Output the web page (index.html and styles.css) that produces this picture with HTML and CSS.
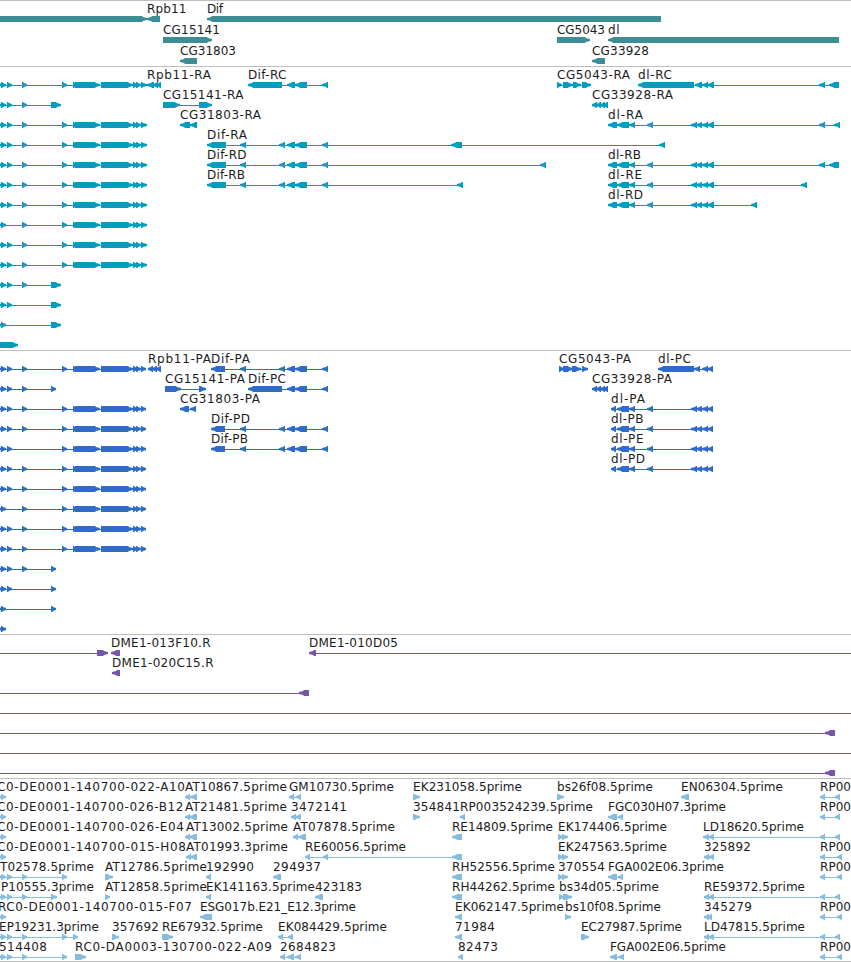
FILE: index.html
```html
<!DOCTYPE html>
<html lang="en">
<head>
  <meta charset="UTF-8" />
  <title>Genome Tracks</title>
  <link rel="stylesheet" href="styles.css">
</head>
<body>
  <div class="browser">
    <div class="track genes" id="genes"></div>
    <div class="track transcripts" id="transcripts"></div>
    <div class="track proteins" id="proteins"></div>
    <div class="track bacs" id="bacs"></div>
    <div class="track ests" id="ests"></div>
  </div>
  <script src="tracks.js"></script>
</body>
</html>
```
FILE: styles.css
```css
body {
  margin: 0;
  background: #fff;
  overflow: hidden;
}
.browser {
  width: 851px;
  height: 962px;
  display: flex;
  flex-direction: column;
  border-bottom: 1px solid #bebebe;
  box-sizing: border-box;
  overflow: hidden;
}
.track {
  border-top: 1px solid #bebebe;
  padding-bottom: 3px;
}
.row {
  display: block;
  width: 851px;
  height: 20px;
  overflow: visible;
}
.row text {
  font-family: "DejaVu Sans", sans-serif;
  font-size: 12px;
  fill: #1c1c1c;
}
.row polygon,
.row rect {
  fill: currentColor;
}
.genes {
  color: #3d8e94;
  padding-bottom: 2px;
}
.genes .row {
  height: 21px;
}
.transcripts {
  color: #009dbf;
}
.proteins {
  color: #2f6bcb;
}
.bacs {
  color: #7856a7;
}
.ests {
  color: #87bcde;
  padding-bottom: 2px;
}
```
FILE: tracks.js
```js
// Each row is a list of features: "direction start,end start,end ... | label x end"
const first = '> -4,2 1,6 7,12 22,27 62,67 73,76 75,100 101,133 133,138 136,141 141,';
const noSecond = '> -4,2 1,6 22,27 62,67 73,76 75,100 101,133 133,138 136,141 141,';
const noThird = '> -4,2 1,6 7,12 62,67 73,76 75,100 101,133 133,138 136,141 141,';
const dif = ' 240,246 279,285 287,295 295,307 322,328';
const dl = ' 617,629 629,635 647,653 691,697 696,702 702,708 707,';

const tracks = {
  genes: [
    ['> -10,147', '< 147,160 | Rpb11 147 186.5', '< 207,661 | Dif 207 223'],
    ['> 163,212 | CG15141 163 220', '> 557,590 | CG5043 557 605', '< 608,839 | dl 608 619.5'],
    ['< 180,197 | CG31803 180 236', '< 592,605 | CG33928 592 649']
  ],
  transcripts: [
    [first + '147', '< 147,154 153,158 157,161 | Rpb11-RA 147 211', '< 248,282 287,295 295,307 322,328 | Dif-RC 248 286.5',
      '> 557,562 563,573 573,581 582,591 | CG5043-RA 557 630', '< 638,694 695,702 702,708 707,714 819,825 829,839 | dl-RC 638 672'],
    ['> -4,2 1,6 7,12 22,27 51,61', '> 163,180 199,212 | CG15141-RA 163 243.5', '< 592,597 596,601 600,605 603,608 | CG33928-RA 592 673'],
    [first + '147', '< 180,190 190,197 | CG31803-RA 180 261', '< 608,617' + dl + '714 819,825 834,840 | dl-RA 608 643'],
    [first + '147', '< 207,226' + dif + ' 451,462 659,665 | Dif-RA 207 247'],
    [first + '147', '< 207,226' + dif + ' 540,546 | Dif-RD 207 246.5', '< 608,617' + dl + '714 819,825 829,839 | dl-RB 608 641'],
    [first + '147', '< 207,226' + dif + ' 457,463 | Dif-RB 207 245', '< 608,617' + dl + '714 801,807 | dl-RE 608 642'],
    [first + '147', '< 608,617' + dl + '714 751,757 | dl-RD 608 643'],
    [noSecond + '147'],
    [first + '147'],
    [first + '147'],
    ['> -4,2 1,6 7,12 22,27 51,61'],
    ['> -4,2 1,6 7,12 51,61'],
    ['> -4,2 1,6 51,61'],
    ['> 0,18']
  ],
  proteins: [
    [first + '146', '< 148,153 152,157 156,161 | Rpb11-PA 148 211', '< 211,225' + dif + ' | Dif-PA 211 250',
      '> 559,564 563,573 572,581 582,588 | CG5043-PA 559 631', '< 658,694 694,700 702,708 707,713 | dl-PC 658 691'],
    ['> -4,2 1,6 7,12 22,27 51,56', '> 165,181 199,206 | CG15141-PA 165 245', '< 248,282 287,295 295,307 322,328 | Dif-PC 248 286',
      '< 592,597 596,601 600,605 603,608 | CG33928-PA 592 672'],
    [first + '146', '< 180,189 190,196 | CG31803-PA 180 260', '< 611,616' + dl + '713 | dl-PA 611 645'],
    [first + '146', '< 211,225' + dif + ' | Dif-PD 211 250', '< 611,616' + dl + '713 | dl-PB 611 643.5'],
    [noThird + '146', '< 211,225' + dif + ' | Dif-PB 211 248', '< 611,616' + dl + '713 | dl-PE 611 643.5'],
    [first + '146', '< 611,616' + dl + '713 | dl-PD 611 645'],
    [first + '146'],
    [noSecond + '146'],
    [first + '146'],
    [first + '146'],
    ['> -4,2 1,6 7,12 22,27 51,56'],
    ['> -4,2 1,6 7,12 51,56'],
    ['> -4,2 1,6 51,56'],
    ['> -4,2 1,6']
  ],
  bacs: [
    ['> -20,-10 97,108', '< 111,120 | DME1-013F10.R 111 210.5', '< 309,316 870,880 | DME1-010D05 309 398'],
    ['< 112,120 | DME1-020C15.R 112 213.5'],
    ['< -20,-10 299,309'],
    ['< -20,-10 870,880'],
    ['< -20,-10 825,835'],
    ['< -20,-10 870,880'],
    ['< -20,-10 825,835']
  ],
  ests: [
    ['> -4,2 1,6 | C0-DE0001-140700-022-A10 -3 185', '< 185,190 190,197 | AT10867.5prime 185 287', '< 289,294 296,301 | GM10730.5prime 289 394',
      '> 413,420 | EK231058.5prime 413 522', '> 557,564 | bs26f08.5prime 557 653', '< 681,689 | EN06304.5prime 681 783', '< 820,825 835,840 | RP00 820 851'],
    ['> -4,2 1,6 | C0-DE0001-140700-026-B12 -3 183.5', '< 185,190 189,197 | AT21481.5prime 185 287', '< 291,296 295,301 | 3472141 291 347',
      '> 413,420 | 354841 413 460', '< 460,465 | RP003524239.5prime 460 593', '< 608,617 618,623 | FGC030H07.3prime 608 726', '< 820,825 835,840 | RP00 820 851'],
    ['> -4,2 1,6 | C0-DE0001-140700-026-E04 -3 184', '< 185,190 189,197 | AT13002.5prime 186 288', '< 293,298 298,306 | AT07878.5prime 293 395',
      '< 452,462 | RE14809.5prime 452 553', '> 558,563 562,568 | EK174406.5prime 558 667', '< 703,709 708,714 820,825 835,840 | LD18620.5prime 703 804'],
    ['> -4,2 1,6 | C0-DE0001-140700-015-H08 -3 186', '< 186,191 190,197 | AT01993.3prime 186 288', '< 305,310 323,328 452,462 | RE60056.5prime 305 406',
      '> 558,563 562,568 | EK247563.5prime 558 667', '< 704,709 708,714 | 325892 704 751', '< 820,825 837,842 | RP00 820 851'],
    ['> -4,2 1,6 7,12 22,27 62,67 | T02578.5prime 0 94', '> 105,113 | AT12786.5prime 105 207', '< 206,211 | 192990 206 254', '< 273,281 | 294937 273 321',
      '< 452,462 | RH52556.5prime 452 555', '> 558,563 562,568 | 370554 558 605', '< 608,617 618,623 | FGA002E06.3prime 608 724', '< 820,825 837,842 | RP00 820 851'],
    ['> -4,2 1,6 7,12 22,27 51,57 | P10555.3prime 1 94', '> 105,110 | AT12858.5prime 105 207', '< 206,211 | EK141163.5prime 206 315', '< 315,323 | 423183 315 362',
      '< 452,462 | RH44262.5prime 452 555', '> 559,564 563,572 | bs34d05.5prime 559 659', '< 704,709 708,714 820,825 835,840 | RE59372.5prime 704 805'],
    ['> -4,2 1,6 | RC0-DE0001-140700-015-F07 -2 192', '< 200,212 | ESG017b.E21_E12.3prime 200 356', '< 455,462 | EK062147.5prime 455 564',
      '> 565,571 | bs10f08.5prime 565 661', '< 704,709 707,712 | 345279 704 752', '< 820,825 837,842 | RP00 820 851'],
    ['> -4,2 1,6 7,12 22,27 62,67 73,78 | EP19231.3prime -1 99', '> 112,119 | 357692 112 159', '> 162,173 | RE67932.5prime 162 263', '< 278,283 288,293 | EK084429.5prime 278 387',
      '< 455,462 | 71984 455 495', '> 581,589 | EC27987.5prime 581 682', '< 704,709 708,714 820,825 835,840 | LD47815.5prime 704 805'],
    ['> -4,2 1,6 7,12 22,27 62,67 | 514408 -1 47', '> 75,86 | RC0-DA0003-130700-022-A09 75 272', '< 280,285 287,294 295,301 | 2684823 280 336',
      '< 458,463 | 82473 458 498', '< 610,617 618,624 | FGA002E06.5prime 610 726', '< 820,825 837,842 | RP00 820 851']
  ]
};

function exon(dir, a, b) {
  const head = Math.min(5, b - a - 1);
  if (dir === '>') {
    const s = b - head;
    return `<polygon points="${a},15 ${s},15 ${s + 1},16 ${b},17 ${b},19 ${s + 1},20 ${s},21 ${a},21"/>`;
  }
  const s = a + head;
  return `<polygon points="${b},15 ${s},15 ${s - 1},16 ${a},17 ${a},19 ${s - 1},20 ${s},21 ${b},21"/>`;
}

function feature(item) {
  const [shape, label] = item.split(' | ');
  const [dir, ...spans] = shape.split(' ');
  const exons = spans.map(s => s.split(',').map(Number));
  const start = exons[0][0];
  const end = exons[exons.length - 1][1];
  let out = '';
  if (exons.length > 1) {
    out += `<rect x="${start + 2}" y="18" width="${end - start - 4}" height="1"/>`;
  }
  out += exons.map(([a, b]) => exon(dir, a, b)).join('');
  if (label) {
    const [name, x, x2] = label.split(' ');
    out += `<text x="${x}" y="12" textLength="${x2 - x}">${name}</text>`;
  }
  return out;
}

for (const id in tracks) {
  document.getElementById(id).innerHTML = tracks[id]
    .map(row => `<svg class="row">${row.map(feature).join('')}</svg>`)
    .join('');
}
```
